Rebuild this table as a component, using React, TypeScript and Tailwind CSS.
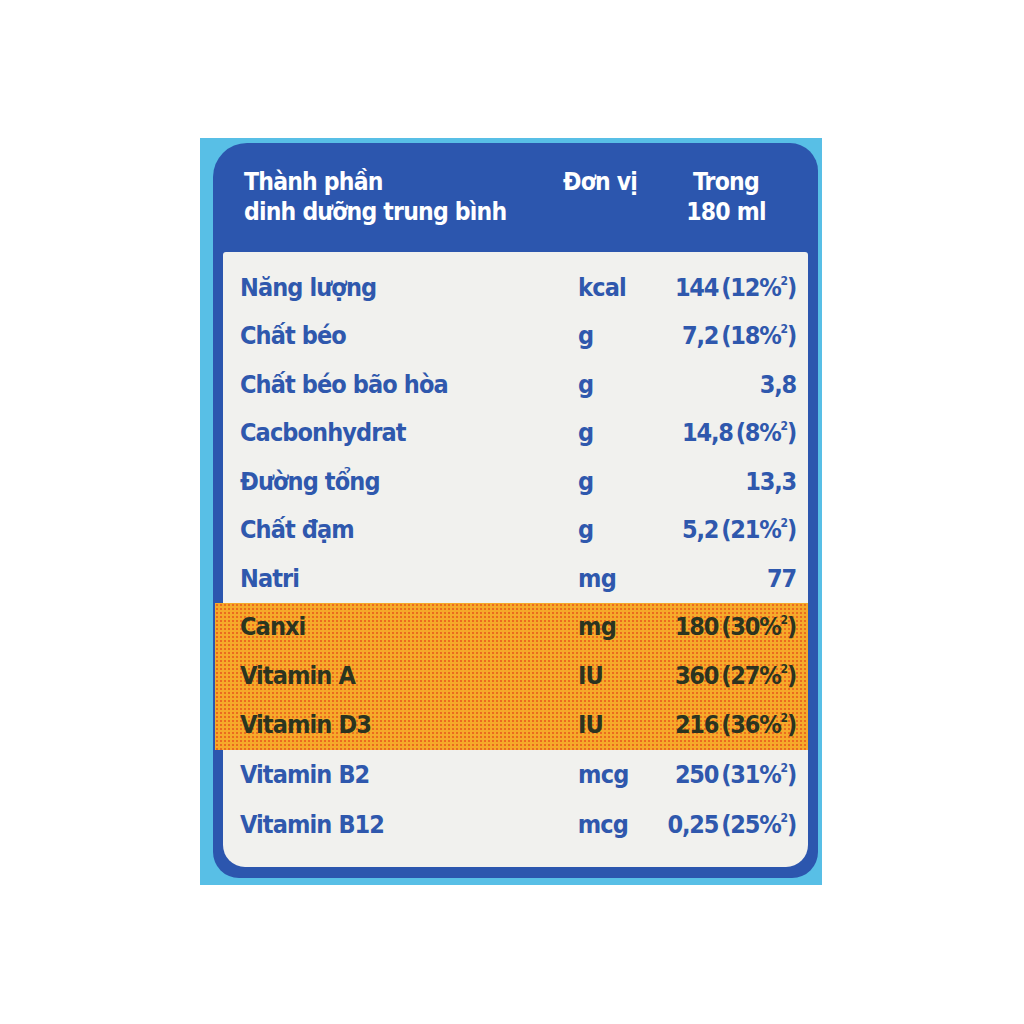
const rows = [
  { name: "Năng lượng", unit: "kcal", value: "144", pct: "12" },
  { name: "Chất béo", unit: "g", value: "7,2", pct: "18" },
  { name: "Chất béo bão hòa", unit: "g", value: "3,8" },
  { name: "Cacbonhydrat", unit: "g", value: "14,8", pct: "8" },
  { name: "Đường tổng", unit: "g", value: "13,3" },
  { name: "Chất đạm", unit: "g", value: "5,2", pct: "21" },
  { name: "Natri", unit: "mg", value: "77" },
];

const orangeRows = [
  { name: "Canxi", unit: "mg", value: "180", pct: "30" },
  { name: "Vitamin A", unit: "IU", value: "360", pct: "27" },
  { name: "Vitamin D3", unit: "IU", value: "216", pct: "36" },
];

const lastRows = [
  { name: "Vitamin B2", unit: "mcg", value: "250", pct: "31" },
  { name: "Vitamin B12", unit: "mcg", value: "0,25", pct: "25" },
];

type Row = { name: string; unit: string; value: string; pct?: string };

const Line = ({ row, h }: { row: Row; h: string }) => (
  <div className={`flex items-center ${h}`}>
    <div className="w-[355px] pl-[17px] tracking-[-0.9px]">{row.name}</div>
    <div className="w-[90px] tracking-[-0.8px]">{row.unit}</div>
    <div className="flex-1 pr-[12px] text-right tracking-[-1.2px]">
      {row.value}
      {row.pct && (
        <span className="ml-[3px]">
          ({row.pct}%<sup className="text-[12px] -top-[0.9em]">2</sup>)
        </span>
      )}
    </div>
  </div>
);

export default function App() {
  return (
    <div
      className="w-full h-[1024px] bg-white pt-[138px] pl-[200px]"
      style={{ fontFamily: '"DejaVu Sans Condensed", "DejaVu Sans", sans-serif' }}
    >
      <div className="w-[622px] h-[747px] bg-[#58bfe6] pt-[5px] pl-[13px]">
        <div className="w-[605px] h-[735px] bg-[#2c56ae] rounded-tl-[34px] rounded-tr-[28px] rounded-b-[26px] flex flex-col">
          {/* header */}
          <div className="h-[109px] flex text-white font-bold text-[24.5px] leading-[30px] tracking-[-0.8px] pt-[24px]">
            <div className="w-[350px] pl-[31px]">
              <div>Thành phần</div>
              <div>dinh dưỡng trung bình</div>
            </div>
            <div className="w-[118px]">Đơn vị</div>
            <div className="w-[90px] text-center">
              <div>Trong</div>
              <div>180 ml</div>
            </div>
          </div>
          {/* body */}
          <div className="mx-[10px] mb-[11px] flex-1 bg-[#f1f1ee] rounded-b-[22px] rounded-t-[3px] pt-[11px] font-bold text-[25px] text-[#2f58ad]">
            {rows.map((r) => (
              <Line key={r.name} row={r} h="h-[48.5px]" />
            ))}
            <div className="-ml-[8px] pl-[8px] bg-[#f6aa2a] bg-[radial-gradient(#ea6a1e_0.7px,transparent_1.2px)] bg-[length:4px_4px] text-[#2b3420]">
              {orangeRows.map((r) => (
                <Line key={r.name} row={r} h="h-[49px]" />
              ))}
            </div>
            {lastRows.map((r) => (
              <Line key={r.name} row={r} h="h-[50px]" />
            ))}
          </div>
        </div>
      </div>
    </div>
  );
}
